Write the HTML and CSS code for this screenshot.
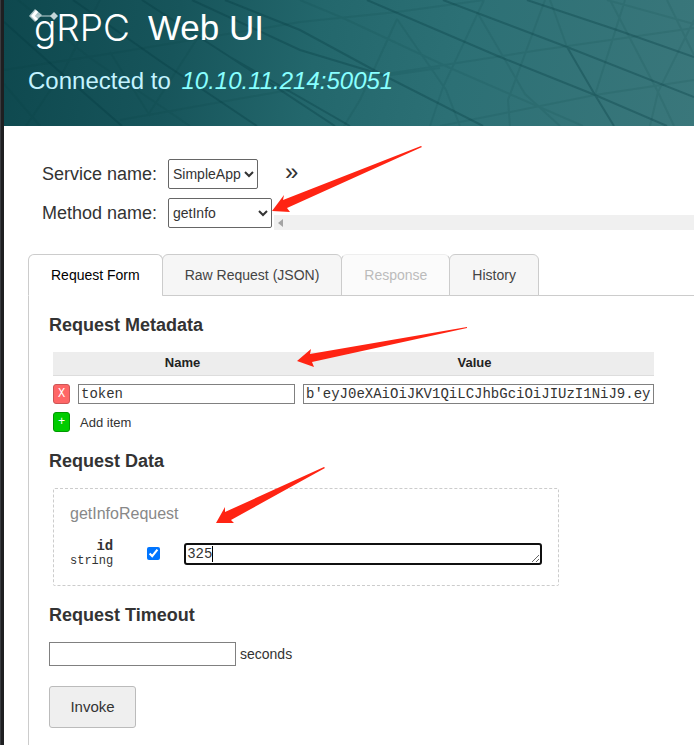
FILE: index.html
```html
<!DOCTYPE html>
<html lang="en">
<head>
<meta charset="utf-8">
<title>gRPC Web UI</title>
<link rel="stylesheet" href="styles.css">
</head>
<body>
<header class="banner">
  <svg class="banner-art" viewBox="4 0 690 126" preserveAspectRatio="xMinYMin slice" aria-hidden="true">
    <g class="ray strong">
      <path d="M73 0L160 61L257 126M142 0L230 57L350 126M192 0L300 50L383 75M225 0L300 30L383 75L483 126M367 0L500 57L595 95L667 126M443 0L567 47L694 97M527 0L617 30L694 57M4 22L60 72L122 126M567 47L595 95L614 126M230 57L335 126"/>
    </g>
    <g class="ray">
      <path d="M18 0L90 58L190 126M300 0L343 18L450 68L583 126M607 0L694 24M4 84L40 126M100 0L64 70L26 126M110 52L150 116M204 28L148 115M484 0L443 87L430 126M397 19L360 100L344 126M545 0L508 100L510 126M625 0L595 95M694 20L658 92L650 126M300 22L397 12L484 0M397 19L446 90L460 126M477 12L525 94L560 126M550 0L567 47M610 0L658 92L674 126M667 0L694 55M380 75L540 50L694 28M440 126L595 95L694 80M120 120L300 88L440 68M4 70L120 52L300 22"/>
    </g>
  </svg>
  <h1 class="title">
    <span class="logo">
      <svg class="logo-mark" viewBox="0 0 30 16" aria-hidden="true">
        <path class="diamond" d="M7 1L14 7L7 14L1 8Z"/>
        <path class="chevron" d="M9 3L5 8L9 12"/>
        <path class="link" d="M7 8H26"/>
        <path class="node" d="M26 4L30 8L26 12L22 8Z"/>
      </svg>gRPC</span>
    <span>Web UI</span>
  </h1>
  <p class="target">Connected to <em>10.10.11.214:50051</em></p>
</header>
<main>
  <section class="selectors">
    <label for="service">Service name:</label>
    <div class="field">
      <select id="service" class="service"><option>SimpleApp</option></select>
      <span class="more">»</span>
    </div>
    <label for="method">Method name:</label>
    <div class="field">
      <select id="method" class="method"><option>getInfo</option></select>
      <div class="scroll-track"><svg viewBox="0 0 5 8" aria-hidden="true"><path d="M5 0V8L0 4Z"/></svg></div>
    </div>
  </section>
  <nav class="tabs">
    <button class="tab active" type="button">Request Form</button>
    <button class="tab" type="button">Raw Request (JSON)</button>
    <button class="tab" type="button" disabled>Response</button>
    <button class="tab" type="button">History</button>
  </nav>
  <form class="panel">
    <h2>Request Metadata</h2>
    <table class="metadata">
      <colgroup><col class="col-action"><col class="col-name"><col></colgroup>
      <thead><tr><th></th><th>Name</th><th>Value</th></tr></thead>
      <tbody>
        <tr>
          <td><button class="row-btn delete" type="button">X</button></td>
          <td><input type="text" aria-label="Name" value="token"></td>
          <td><input type="text" aria-label="Value" value="b'eyJ0eXAiOiJKV1QiLCJhbGciOiJIUzI1NiJ9.ey"></td>
        </tr>
        <tr>
          <td><button id="add" class="row-btn add" type="button">+</button></td>
          <td colspan="2"><label class="add-label" for="add">Add item</label></td>
        </tr>
      </tbody>
    </table>
    <h2>Request Data</h2>
    <div class="message">
      <div class="message-name">getInfoRequest</div>
      <div class="message-row">
        <label class="field-name" for="id-value"><strong>id</strong><span>string</span></label>
        <input type="checkbox" aria-label="Include id" checked>
        <div class="value-box">
          <textarea id="id-value" rows="1">325</textarea>
          <span class="caret"></span>
        </div>
      </div>
    </div>
    <h2>Request Timeout</h2>
    <div class="timeout">
      <input id="timeout" type="text"><label for="timeout">seconds</label>
    </div>
    <button class="invoke" type="button">Invoke</button>
  </form>
</main>
<svg class="pointers" viewBox="0 0 694 745" aria-hidden="true">
  <path d="M272 211L284 195L283 200L421 146L422 147L287 208L290 212Z"/>
  <path d="M297 361L311 349L310 354L467 327V328L312 362L314 367Z"/>
  <path d="M216 523L225 507V512L324 467L325 468L231 520L234 523Z"/>
</svg>
</body>
</html>
```
FILE: styles.css
```css
* {
  box-sizing: border-box;
}

body {
  position: relative;
  display: flex;
  flex-direction: column;
  min-height: 100vh;
  margin: 0;
  padding-left: 4px;
  background: linear-gradient(90deg, #3a3c40 1px, #1e1f21 1px, #1e1f21 4px, #fff 4px);
  color: #333;
  font: 14px/20px "Liberation Sans", Arial, sans-serif;
}

button,
select {
  font-family: inherit;
}

.banner {
  position: relative;
  height: 126px;
  padding: 8px 24px;
  overflow: hidden;
  background: linear-gradient(100deg, #0e484e 0%, #17555b 25%, #23676c 45%, #2c7075 65%, #3a777b 100%);
}

.banner-art {
  position: absolute;
  inset: 0;
  width: 100%;
  height: 100%;
}

.ray {
  fill: none;
  stroke: #04383f;
  stroke-opacity: 0.1;
  stroke-width: 2;
}

.ray.strong {
  stroke-opacity: 0.3;
}

.title {
  position: relative;
  display: flex;
  gap: 18px;
  margin: 0;
  color: #fff;
  font-size: 35px;
  font-weight: 400;
  line-height: 40px;
}

.logo {
  position: relative;
  padding-left: 6px;
  font-family: Inter, sans-serif;
  font-size: 37px;
  font-weight: 300;
}

.logo-mark {
  position: absolute;
  top: 0;
  left: 0;
  width: 30px;
  height: 16px;
  fill: none;
  stroke: #fff;
}

.logo-mark .diamond {
  fill: #a9c3c6;
  stroke: none;
}

.logo-mark .chevron {
  stroke-width: 3;
}

.logo-mark .link {
  stroke: #c3d5d7;
}

.logo-mark .node {
  fill: #c3d5d7;
  stroke: none;
}

.target {
  position: relative;
  margin: 17px 0 0;
  color: #c3f3ff;
  font-size: 24px;
  line-height: 32px;
}

.target em {
  margin-left: 4px;
  color: #8ff;
}

main {
  display: flex;
  flex: 1;
  flex-direction: column;
  padding: 33px 0 0 24px;
}

.selectors {
  display: grid;
  grid-template-columns: 112px 1fr;
  gap: 9px 14px;
  padding-left: 14px;
  font-size: 18px;
  line-height: 30px;
  white-space: nowrap;
}

.field {
  display: flex;
  height: 30px;
}

.field select {
  padding: 0;
  border: 1px solid #666;
  border-radius: 2px;
  background: #fff;
  color: #333;
  font-size: 14px;
}

.service {
  width: 90px;
}

.method {
  width: 104px;
}

.more {
  margin-left: 27px;
  font-size: 24px;
  line-height: 26px;
}

.scroll-track {
  display: flex;
  flex: 1;
  align-items: center;
  height: 15px;
  margin: 17px 0 0 2px;
  padding-left: 4px;
  background: #f0f0f0;
}

.scroll-track svg {
  width: 5px;
  height: 8px;
  fill: #a3a3a3;
}

.tabs {
  display: flex;
  margin-top: 26px;
  border-bottom: 1px solid #ccc;
}

.tab {
  height: 42px;
  margin: 0 -1px -1px 0;
  padding: 0 22px;
  border: 1px solid #ccc;
  border-radius: 6px 6px 0 0;
  background: #f6f6f6;
  color: #444;
  font-size: 14px;
}

.tab.active {
  border-bottom-color: #fff;
  background: #fff;
  color: #000;
}

.tab:disabled {
  border-color: #eee #ccc #ccc;
  background: #fbfbfb;
  color: #bbb;
}

.panel {
  flex: 1;
  padding: 17px 20px 16px;
  border-left: 1px solid #ccc;
}

h2 {
  margin: 0;
  font-size: 18px;
  line-height: 24px;
}

.metadata {
  width: 601px;
  max-width: 100%;
  margin: 15px 0 16px 4px;
  border-collapse: collapse;
  table-layout: fixed;
}

.col-action {
  width: 17px;
}

.col-name {
  width: 225px;
}

.metadata th {
  height: 23px;
  padding: 0;
  border-bottom: 1px solid #ddd;
  background: #ededed;
  color: #222;
  font-size: 13px;
}

.metadata td {
  height: 28px;
  padding: 8px 0 0;
}

.metadata td + td {
  padding-left: 8px;
}

.metadata input {
  display: block;
  width: 100%;
  height: 20px;
  padding: 1px 2px;
  border: 1px solid #808080;
  color: #333;
  font: 14px "Liberation Mono", monospace;
}

.row-btn {
  display: block;
  width: 17px;
  height: 20px;
  padding: 0;
  border: 1px solid;
  border-radius: 3px;
  color: #fff;
  font: 12px/16px "Liberation Mono", monospace;
}

.delete {
  border-color: #c55;
  background: #f66;
}

.add {
  border-color: #090;
  background: #0c0;
}

.add-label {
  padding-left: 2px;
  font-size: 13px;
}

.message {
  width: 506px;
  max-width: 100%;
  margin: 15px 0 17px 4px;
  padding: 15px 16px 16px;
  border: 1px dashed #ccc;
  border-radius: 2px;
}

.message-name {
  color: #888;
  font-size: 16px;
}

.message-row {
  display: flex;
  align-items: center;
  margin-top: 15px;
}

.field-name {
  display: flex;
  flex-direction: column;
  align-items: flex-end;
  font: 12px/15px "Liberation Mono", monospace;
}

.field-name strong {
  font-size: 14px;
}

.message-row input {
  width: 13px;
  height: 13px;
  margin: 0 24px 0 34px;
}

.value-box {
  position: relative;
  flex: 1;
}

.value-box textarea {
  display: block;
  width: 100%;
  height: 22px;
  padding: 1px;
  border: 2px solid #101010;
  border-radius: 3px;
  overflow: hidden;
  outline: 0;
  color: #333;
  font: 14px/16px "Liberation Mono", monospace;
}

.caret {
  position: absolute;
  top: 3px;
  left: 28px;
  width: 1px;
  height: 16px;
  background: #000;
}

.timeout {
  display: flex;
  gap: 4px;
  align-items: center;
  margin-top: 15px;
}

.timeout input {
  width: 187px;
  height: 24px;
  border: 1px solid #808080;
}

.invoke {
  min-width: 87px;
  height: 42px;
  margin-top: 20px;
  padding: 0 20px;
  border: 1px solid #bbb;
  border-radius: 3px;
  background: #efefef;
  color: #333;
  font-size: 15px;
}

.pointers {
  position: absolute;
  top: 0;
  left: 0;
  width: 694px;
  height: 745px;
  fill: #ff2413;
  pointer-events: none;
}
```
